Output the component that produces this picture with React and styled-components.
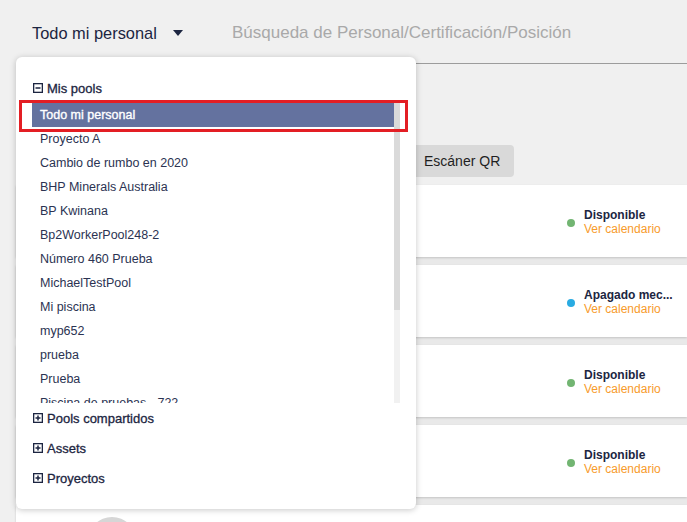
import React from "react";
import styled, { createGlobalStyle } from "styled-components";

const Global = createGlobalStyle`
  html, body { margin: 0; padding: 0; }
  body { font-family: "Liberation Sans", Arial, sans-serif; background: #f0f0f0; }
  * { box-sizing: border-box; }
`;

const Page = styled.div`
  position: relative;
  width: 687px;
  height: 522px;
  overflow: hidden;
  background: #f0f0f0;
`;

const TopBar = styled.div`
  display: flex;
  align-items: center;
  height: 64px;
  padding: 4px 0 0 32px;
`;

const PoolPicker = styled.div`
  display: flex;
  align-items: center;
  gap: 16px;
  width: 188px;
  font-size: 16.4px;
  color: #1c2541;
  padding-bottom: 2px;
`;

const Caret = styled.span`
  width: 0;
  height: 0;
  border-left: 5px solid transparent;
  border-right: 5px solid transparent;
  border-top: 6px solid #1c2541;
`;

const SearchField = styled.div`
  flex: 1;
  align-self: stretch;
  display: flex;
  align-items: center;
  padding-left: 12px;
  padding-bottom: 2px;
  border-bottom: 1px solid #9c9c9c;
  font-size: 17px;
  color: #a9a9a9;
`;

const Toolbar = styled.div`
  display: flex;
  justify-content: flex-start;
  height: 121px;
  padding: 81px 0 0 408px;
`;

const ScanButton = styled.div`
  height: 32px;
  padding: 0 14px 0 16px;
  display: flex;
  align-items: center;
  white-space: nowrap;
  background: #d9d9d9;
  border-radius: 4px;
  font-size: 14px;
  color: #1f1f1f;
`;

const CardList = styled.div`
  display: flex;
  flex-direction: column;
  gap: 8px;
  margin-left: 16px;
  background: #e9e9e9;
`;

const Card = styled.div`
  display: flex;
  align-items: center;
  height: 72px;
  background: #fff;
  box-shadow: 0 1px 2px rgba(0, 0, 0, 0.16);
  padding-left: 72px;
`;

const Avatar = styled.div`
  width: 48px;
  height: 48px;
  border-radius: 50%;
  background: #d6d6d6;
`;

const Status = styled.div`
  margin-left: auto;
  width: 120px;
  display: flex;
  align-items: center;
  gap: 9px;
  padding-top: 1px;
`;

const Dot = styled.span`
  width: 8px;
  height: 8px;
  border-radius: 50%;
  background: ${(p) => p.$color};
  margin-top: 3px;
`;

const StatusText = styled.div`
  display: flex;
  flex-direction: column;
  font-size: 12px;
  line-height: 14px;
`;

const StatusLabel = styled.span`
  font-weight: 700;
  color: #1c2541;
  white-space: nowrap;
`;

const CalendarLink = styled.span`
  color: #f89b2c;
`;

const Popup = styled.div`
  position: absolute;
  left: 16px;
  top: 57px;
  width: 400px;
  height: 452px;
  background: #fff;
  border-radius: 6px;
  box-shadow: 0 1px 6px rgba(0, 0, 0, 0.22);
  padding: 20px 16px 16px 16px;
  display: flex;
  flex-direction: column;
`;

const GroupHeader = styled.div`
  display: flex;
  align-items: center;
  gap: 4px;
  height: ${(p) => p.$h}px;
  padding-left: 1px;
  font-size: 13px;
  color: #1c2541;
  -webkit-text-stroke: 0.3px #1c2541;
`;

const ListRow = styled.div`
  display: flex;
  height: 303px;
  margin-top: 1px;
`;

const ScrollList = styled.div`
  flex: 1;
  overflow: hidden;
  padding-top: 3px;
`;

const ScrollTrack = styled.div`
  width: 6px;
  background: #f1f1f1;
`;

const ScrollThumb = styled.div`
  height: 210px;
  background: #dadada;
`;

const Item = styled.div`
  height: 24px;
  display: flex;
  align-items: center;
  padding-left: 8px;
  font-size: 12.5px;
  white-space: nowrap;
  color: ${(p) => (p.$active ? "#fff" : "#2b3352")};
  background: ${(p) => (p.$active ? "#64729f" : "transparent")};
  -webkit-text-stroke: ${(p) => (p.$active ? "0.35px #fff" : "0")};
`;

const Highlight = styled.div`
  position: absolute;
  left: 3px;
  top: 43px;
  width: 389px;
  height: 32px;
  border: 3px solid #e31e24;
  pointer-events: none;
`;

const BoxIcon = ({ plus }) => (
  <svg width="10" height="10" viewBox="0 0 10 10">
    <rect x="0.65" y="0.65" width="8.7" height="8.7" fill="none" stroke="#1c2541" strokeWidth="1.3" />
    <line x1="2.5" y1="5" x2="7.5" y2="5" stroke="#1c2541" strokeWidth="1.5" />
    {plus && <line x1="5" y1="2.5" x2="5" y2="7.5" stroke="#1c2541" strokeWidth="1.5" />}
  </svg>
);

const pools = [
  "Todo mi personal",
  "Proyecto A",
  "Cambio de rumbo en 2020",
  "BHP Minerals Australia",
  "BP Kwinana",
  "Bp2WorkerPool248-2",
  "Número 460 Prueba",
  "MichaelTestPool",
  "Mi piscina",
  "myp652",
  "prueba",
  "Prueba",
  "Piscina de pruebas - 722",
];

const cards = [
  { label: "Disponible", color: "#72b572" },
  { label: "Apagado mec...", color: "#29abe2" },
  { label: "Disponible", color: "#72b572" },
  { label: "Disponible", color: "#72b572" },
  { label: "Disponible", color: "#72b572" },
];

export default function App() {
  return (
    <Page>
      <Global />
      <TopBar>
        <PoolPicker>
          Todo mi personal <Caret />
        </PoolPicker>
        <SearchField>Búsqueda de Personal/Certificación/Posición</SearchField>
      </TopBar>
      <Toolbar>
        <ScanButton>Escáner QR</ScanButton>
      </Toolbar>
      <CardList>
        {cards.map((c, i) => (
          <Card key={i}>
            <Avatar />
            <Status>
              <Dot $color={c.color} />
              <StatusText>
                <StatusLabel>{c.label}</StatusLabel>
                <CalendarLink>Ver calendario</CalendarLink>
              </StatusText>
            </Status>
          </Card>
        ))}
      </CardList>

      <Popup>
        <GroupHeader $h={22}>
          <BoxIcon />
          Mis pools
        </GroupHeader>
        <ListRow>
          <ScrollList>
            {pools.map((p, i) => (
              <Item key={p} $active={i === 0}>
                {p}
              </Item>
            ))}
          </ScrollList>
          <ScrollTrack>
            <ScrollThumb />
          </ScrollTrack>
        </ListRow>
        <GroupHeader $h={30}>
          <BoxIcon plus />
          Pools compartidos
        </GroupHeader>
        <GroupHeader $h={30}>
          <BoxIcon plus />
          Assets
        </GroupHeader>
        <GroupHeader $h={30}>
          <BoxIcon plus />
          Proyectos
        </GroupHeader>
        <Highlight />
      </Popup>
    </Page>
  );
}
